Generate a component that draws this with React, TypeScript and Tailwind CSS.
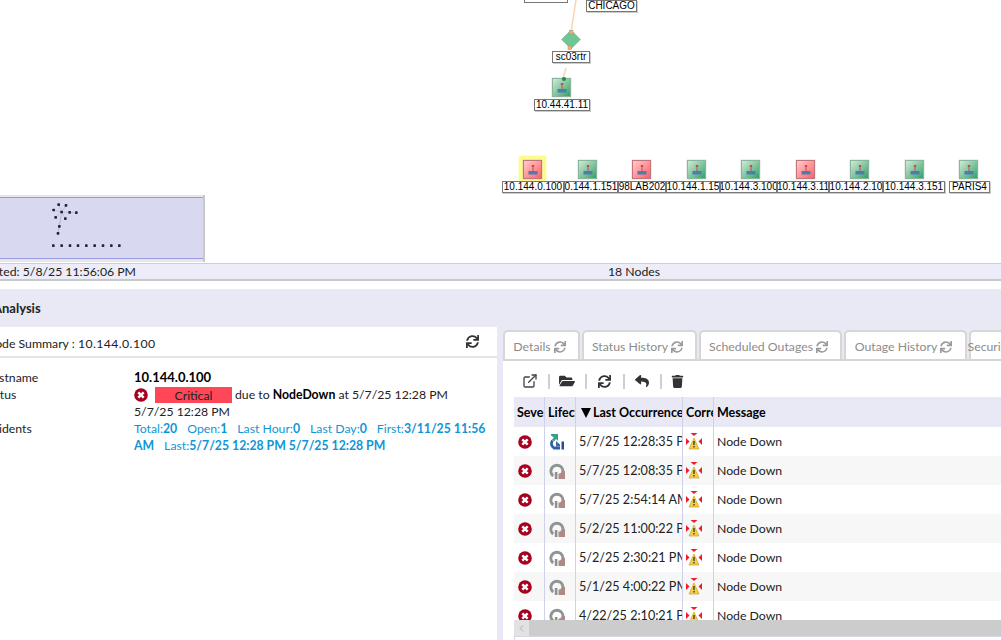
import { FaFolderOpen, FaReply, FaSync, FaTrash } from 'react-icons/fa';
import { FiExternalLink } from 'react-icons/fi';
import { ChevronLeft } from 'lucide-react';

const nodes = [
  { x: 523, label: '10.144.0.100', left: 502, width: 62, down: true, selected: true },
  { x: 578, label: '0.144.1.151', left: 564, width: 54 },
  { x: 632, label: '98LAB202', left: 618, width: 48, down: true },
  { x: 687, label: '10.144.1.15', left: 666, width: 54 },
  { x: 741, label: '10.144.3.100', left: 720, width: 57 },
  { x: 796, label: '10.144.3.11', left: 777, width: 52, down: true },
  { x: 850, label: '10.144.2.10', left: 829, width: 54 },
  { x: 905, label: '10.144.3.151', left: 883, width: 62 },
  { x: 959, label: 'PARIS4', left: 949, width: 41 },
];

const rows = [
  { time: '5/7/25 12:28:35 PM', open: true },
  { time: '5/7/25 12:08:35 PM' },
  { time: '5/7/25 2:54:14 AM' },
  { time: '5/2/25 11:00:22 PM' },
  { time: '5/2/25 2:30:21 PM' },
  { time: '5/1/25 4:00:22 PM' },
  { time: '4/22/25 2:10:21 PM' },
];

const tabs = [
  { name: 'Details', w: 'w-[77px]' },
  { name: 'Status History', w: 'w-[115px]' },
  { name: 'Scheduled Outages', w: 'w-[143px]' },
  { name: 'Outage History', w: 'w-[123px]' },
  { name: 'Security', w: 'w-[60px]' },
];

const mapDots = [
  [176, 45], [198, 47], [161, 61], [185, 67], [209, 68], [229, 69], [167, 83], [196, 87], [178, 110], [174, 131],
  [160, 168], [185, 168], [210, 168], [234, 168], [259, 168], [284, 168], [309, 168], [334, 168], [358, 168],
];

function SeverityIcon() {
  return (
    <svg width="14" height="14" viewBox="0 0 14 14" className="shrink-0">
      <circle cx="7" cy="7" r="6.8" fill="#a8001e" />
      <path d="M4.300 4.300l5.400 5.400M9.700 4.300l-5.400 5.400" stroke="#fff" strokeWidth="2.400" />
    </svg>
  );
}

function LifecycleIcon({ open }: { open?: boolean }) {
  if (open) {
    return (
      <svg width="15" height="16" viewBox="0 0 15 16">
        <path d="M2 0h7v7L7 5 5 7.500 3 5.500 5 3.500 2 1.500z" fill="#35a08c" />
        <path d="M3.500 6.500A5 5 0 0 0 5 14h6" fill="none" stroke="#2d5ea6" strokeWidth="2.800" />
        <path d="M7 7l4 3.500V12.500H7z" fill="#3b69ad" />
        <rect x="12.500" y="7.500" width="2.500" height="8" fill="#23508f" />
      </svg>
    );
  }
  return (
    <svg width="16" height="16" viewBox="0 0 16 16">
      <path d="M4.200 13A6 6 0 1 1 13.800 9.500" fill="none" stroke="#8f9494" strokeWidth="3" />
      <rect x="5.800" y="9" width="2.600" height="7" fill="#8f8f8f" />
      <path d="M9.500 10.500h1.500l1-1 1.500-1.500 2.500 0v8H9.500z" fill="#ad8a86" />
    </svg>
  );
}

function CorrelationIcon() {
  return (
    <svg width="16" height="17" viewBox="0 0 16 17" className="shrink-0">
      <path d="M4.500 0h7L8 3z" fill="#f01c2c" />
      <path d="M0 5v7l3.500-3.500z" fill="#f01c2c" />
      <path d="M16 5v7l-3.500-3.500z" fill="#f01c2c" />
      <path d="M8 5l5 11H3z" fill="#f4cf48" stroke="#c9a227" strokeWidth="0.700" />
      <path d="M8 8v4M8 13v1.500" stroke="#222" strokeWidth="1.200" />
    </svg>
  );
}

function RouterNode({ down }: { down?: boolean }) {
  return (
    <div
      className={`flex h-[19px] w-[19px] items-end justify-center border pb-[3px] shadow-[0_0_1px_#999] ${
        down
          ? 'border-[#c0747c] bg-gradient-to-br from-[#ffcacd] to-[#fb5d69]'
          : 'border-[#88b59c] bg-gradient-to-br from-[#cfead9] to-[#22a468]'
      }`}
    >
      <svg width="10" height="10" viewBox="0 0 10 10">
        <rect x="3.800" y="0" width="2.400" height="2" fill="#d8404a" />
        <rect x="4.500" y="2" width="1" height="4" fill="#b4545c" />
        <rect x="0.500" y="6" width="9" height="3.500" fill="#4f7cae" />
      </svg>
    </div>
  );
}

function NodeLabel({ left, top, width, children }: { left: number; top: number; width: number; children: string }) {
  return (
    <div
      className="absolute flex h-[12px] items-center justify-center overflow-hidden whitespace-nowrap border border-[#777] bg-white font-['Liberation_Sans',sans-serif] text-[10px] leading-[10px] text-black shadow-[1px_1px_0_#ccc]"
      style={{ left, top, width }}
    >
      {children}
    </div>
  );
}

function ToolbarSep({ className }: { className: string }) {
  return <span className={`h-[15px] w-[2px] shrink-0 bg-[#cfcfcf] ${className}`} />;
}

export default function App() {
  return (
    <div className="flex h-[640px] w-[1001px] flex-col overflow-hidden bg-white font-['Lato',sans-serif] text-[12.25px] text-[#222]">
      {/* Topology canvas */}
      <div className="relative h-[263px] shrink-0 overflow-hidden bg-white">
        <svg className="absolute left-0 top-0" width="1001" height="110">
          <path d="M576 0L571 32M566 68L563 78" stroke="#fbd3b5" strokeWidth="1.500" />
        </svg>
        <div className="absolute left-[524px] top-[-10px] h-[13px] w-[44px] border border-[#777] bg-white" />
        <NodeLabel left={586} top={0} width={51}>CHICAGO</NodeLabel>
        <svg className="absolute left-[560px] top-[29px]" width="22" height="21" viewBox="0 0 22 21">
          <path d="M11 1l9.500 9.500L11 20 1.500 10.500z" fill="#6cc795" stroke="#9cc9af" />
          <rect x="9.500" y="1.500" width="3.500" height="3.500" fill="#f0b27a" stroke="#b98a5b" strokeWidth="0.500" />
          <rect x="8" y="17" width="3.500" height="3.500" fill="#f0b27a" stroke="#b98a5b" strokeWidth="0.500" />
        </svg>
        <NodeLabel left={552} top={51} width={38}>sc03rtr</NodeLabel>
        <div className="absolute left-[552px] top-[78px]">
          <RouterNode />
          <div className="absolute left-[10px] top-[-1px] h-[4px] w-[4px] rounded-full bg-[#178a55]" />
        </div>
        <NodeLabel left={534} top={99} width={56}>10.44.41.11</NodeLabel>

        {nodes.map((n) => (
          <div key={n.label} className="absolute top-[160px]" style={{ left: n.x }}>
            {n.selected && <div className="absolute left-[-4px] top-[-4px] h-[25px] w-[27px] bg-[#fdfa8e] shadow-[0_0_2px_#fdfa8e]" />}
            <div className="relative">
              <RouterNode down={n.down} />
            </div>
          </div>
        ))}
        {nodes.map((n) => (
          <NodeLabel key={n.label} left={n.left} top={181} width={n.width}>{n.label}</NodeLabel>
        ))}

        {/* Overview map */}
        <div className="absolute left-[-4px] top-[195px] h-[67px] w-[209px] border-r-2 border-[#c8c8c8] bg-[#e6e6e6] pb-[2px] pt-[2px]">
          <div className="h-[62px] border-y border-[#9a9be0] bg-[#d8d9f0]">
            <svg width="204" height="60" viewBox="0 25 612 180" className="ml-[4px]">
              <path d="M185 67L176 45M185 67L198 47M185 67L161 61M185 67L229 69M185 67L167 83M185 67L196 87M185 67L178 110L174 131" stroke="#a6a7c0" strokeWidth="1.500" />
              {mapDots.map(([x, y]) => (
                <rect key={`${x}-${y}`} x={x - 4} y={y - 4} width="8" height="8" rx="2" fill="#20233a" />
              ))}
            </svg>
          </div>
        </div>
      </div>

      {/* Status bar */}
      <div className="relative flex h-[18px] shrink-0 items-center border-y border-b-2 border-t-[#cfcfcf] border-b-[#c8c8c8] bg-[#ecedf8] pt-[1px]">
        <span className="absolute right-[865px] whitespace-nowrap">Last Updated: 5/8/25 11:56:06 PM</span>
        <span className="absolute left-[608px]">18 Nodes</span>
      </div>

      <div className="h-[8px] shrink-0 bg-white" />

      {/* Analysis heading */}
      <div className="flex h-[38px] shrink-0 items-center bg-[#e9e9f5] pt-[2px]">
        <span className="ml-[-7px] text-[13px] font-bold">Analysis</span>
      </div>

      {/* Panels */}
      <div className="flex min-h-0 flex-1 bg-[#e9e9f5]">
        <div className="w-[497px] shrink-0 overflow-hidden bg-white">
          <div className="flex h-[31px] items-center justify-between border-b-2 border-[#e4e4e4] pr-[18px]">
            <span className="ml-[-14px] whitespace-nowrap pt-[6px]">Node Summary : <span className="tracking-[0.4px]">10.144.0.100</span></span>
            <FaSync className="text-[13px] text-[#333]" />
          </div>
          <div className="mt-[11px] grid grid-cols-[134px_1fr] leading-[17px]">
            <span className="ml-[-17px]">Hostname</span>
            <span className="text-[13px] font-bold text-black">10.144.0.100</span>
            <span className="ml-[-17px]">Status</span>
            <div>
              <div className="flex items-center">
                <SeverityIcon />
                <span className="ml-[7px] mr-[3px] h-[16px] w-[77px] bg-[#ff4757] text-center leading-[17px]">Critical</span>
                <span>due to <b className="text-black">NodeDown</b> at 5/7/25 12:28 PM</span>
              </div>
              <div>5/7/25 12:28 PM</div>
            </div>
            <span className="ml-[-17px]">Incidents</span>
            <div className="pr-[8px] text-[#0f96d6]">
              <span className="mr-[10px]">Total:<b>20</b></span>
              <span className="mr-[10px]">Open:<b>1</b></span>
              <span className="mr-[10px]">Last Hour:<b>0</b></span>
              <span className="mr-[10px]">Last Day:<b>0</b></span>
              <span>First:<b>3/11/25 11:56 AM</b></span>
              <span className="ml-[10px]">Last:<b>5/7/25 12:28 PM 5/7/25 12:28 PM</b></span>
            </div>
          </div>
        </div>

        <div className="ml-[6px] flex min-w-0 flex-1 flex-col">
          {/* Tabs */}
          <div className="mt-[3px] flex h-[31px] shrink-0 gap-[2px] overflow-hidden border-b-2 border-[#d6d6d6]">
            {tabs.map((t) => (
              <div
                key={t.name}
                className={`${t.w} flex shrink-0 items-center justify-center gap-[3px] whitespace-nowrap rounded-t-[5px] border-2 border-b-0 border-[#d6d6d6] bg-white pr-[4px] pt-[3px] text-[#8c8c8c]`}
              >
                {t.name}
                <FaSync className="shrink-0 text-[12px] text-[#9a9a9a]" />
              </div>
            ))}
          </div>

          <div className="flex min-h-0 flex-1 flex-col bg-white pl-[11px]">
            {/* Toolbar */}
            <div className="flex h-[36px] shrink-0 items-center pl-[8px] pt-[4px] text-[#333]">
              <FiExternalLink className="shrink-0 text-[16px] text-[#444]" />
              <ToolbarSep className="ml-[10px] mr-[9px]" />
              <FaFolderOpen className="shrink-0 text-[16px]" />
              <ToolbarSep className="ml-[10px] mr-[11px]" />
              <FaSync className="shrink-0 text-[13px]" />
              <ToolbarSep className="ml-[12px] mr-[10px]" />
              <FaReply className="shrink-0 text-[14px]" />
              <ToolbarSep className="ml-[11px] mr-[9px]" />
              <FaTrash className="shrink-0 text-[13px]" />
            </div>

            {/* Incident table */}
            <div className="grid h-[30px] shrink-0 grid-cols-[31px_31px_107px_31px_1fr] bg-[#e9e9f5] text-[12.5px] font-bold leading-[31px] text-black">
              <div className="overflow-hidden whitespace-nowrap border-r border-[#cfd0ea] pl-[3px]">Severity</div>
              <div className="overflow-hidden whitespace-nowrap border-r border-[#cfd0ea] pl-[3px]">Lifecycle</div>
              <div className="flex items-center overflow-hidden whitespace-nowrap border-r border-[#cfd0ea] pl-[5px]">
                <span className="mr-[2px] h-0 w-0 shrink-0 border-x-[5px] border-t-[10px] border-x-transparent border-t-black" />
                Last Occurrence
              </div>
              <div className="overflow-hidden whitespace-nowrap border-r border-[#cfd0ea] pl-[3px]">Correlation</div>
              <div className="pl-[3px]">Message</div>
            </div>
            <div className="h-[193px] shrink-0 overflow-hidden">
              {rows.map((r, i) => (
                <div
                  key={r.time}
                  className={`grid h-[29px] grid-cols-[31px_31px_107px_31px_1fr] leading-[29px] ${i % 2 === 1 ? 'bg-[#f7f7f7]' : 'bg-white'}`}
                >
                  <div className="flex items-center border-r border-[#cfd0ea] pl-[4px]"><SeverityIcon /></div>
                  <div className="flex items-center border-r border-[#cfd0ea] pl-[4px]"><LifecycleIcon open={r.open} /></div>
                  <div className="overflow-hidden whitespace-nowrap border-r border-[#cfd0ea] pl-[3px] text-[12.6px]">{r.time}</div>
                  <div className="flex items-center border-r border-[#cfd0ea] pl-[3px]"><CorrelationIcon /></div>
                  <div className="pl-[3px]">Node Down</div>
                </div>
              ))}
            </div>
            {/* Horizontal scrollbar */}
            <div className="flex h-[16px] shrink-0 bg-[#cccccc]">
              <div className="flex w-[15px] items-center justify-center bg-[#e2e2e2]">
                <ChevronLeft size={11} className="text-[#aaa]" />
              </div>
            </div>
            <div className="flex-1 border-l border-t border-[#d5d5e8]" />
          </div>
        </div>
      </div>
    </div>
  );
}
